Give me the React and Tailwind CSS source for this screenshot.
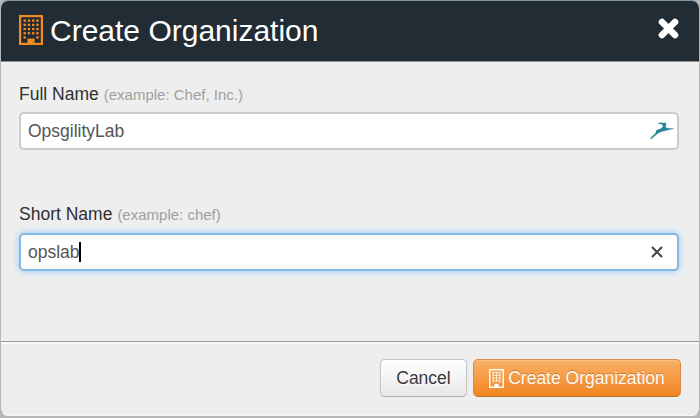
import React from "react";

const windows = [0, 1, 2, 3].flatMap((r) => [0, 1, 2, 3].map((c) => [c, r]));
windows.push([0, 4], [3, 4]);

function HeaderBuilding() {
  return (
    <svg width="24" height="30" viewBox="0 0 24 30" className="shrink-0">
      <rect x="1.1" y="1.1" width="21.8" height="27.8" fill="#222b33" stroke="#f18b21" strokeWidth="2.2" />
      {windows.map(([c, r]) => (
        <rect key={`${c}-${r}`} x={4.5 + c * 4.25} y={4.5 + r * 4.2} width="2.4" height="2.3" fill="#f18b21" />
      ))}
      <path d="M8.5 29v-5.5h7V29z" fill="#f18b21" />
    </svg>
  );
}

function ButtonBuilding() {
  return (
    <svg width="15" height="19" viewBox="0 0 15 19" className="shrink-0">
      <rect x=".75" y=".75" width="13.5" height="17.5" fill="none" stroke="#fff8ec" strokeWidth="1.5" />
      <path d="M3 3.6h9M3 6.4h9M3 9.2h9M3 12h9M4.2 3v11M7.5 3v10M10.8 3v11" stroke="#fff8ec" strokeOpacity=".75" strokeWidth="1" fill="none" />
      <path d="M5.3 18.5v-3.7h4.4v3.7z" fill="#fff8ec" />
    </svg>
  );
}

function Label({ title, hint }) {
  return (
    <label className="flex h-5 items-baseline whitespace-pre text-[17.5px] leading-5 text-[#303030]">
      {title}
      <span className="ml-[5px] text-[15px] text-[#a0a0a0]">{hint}</span>
    </label>
  );
}

export default function App() {
  return (
    <div className="h-[418px] w-[700px] overflow-hidden bg-[#b6b7b8] font-['Liberation_Sans',Arial,sans-serif]">
      <div className="flex h-[416px] w-[700px] flex-col overflow-hidden rounded-[8px] border-x border-b border-t border-x-[#b4b7b9] border-b-[#f5f5f5] border-t-[#87969d] bg-[#eeeeee]">
        <header className="flex h-[61px] shrink-0 items-start justify-between border-b border-[#8e9397] bg-[#222c34] pl-[18px] pr-5">
          <div className="flex items-start pt-[14px]">
            <HeaderBuilding />
            <h1 className="ml-[7px] whitespace-nowrap text-[30px] leading-[32px] text-white">Create Organization</h1>
          </div>
          <svg width="21" height="21" viewBox="0 0 21 21" className="mt-[17px]">
            <path d="M4 4l13 13M17 4L4 17" stroke="#fff" strokeWidth="6.6" strokeLinecap="round" />
          </svg>
        </header>
        <main className="flex h-[279px] shrink-0 flex-col pl-[18px] pr-5 pt-[22px]">
          <Label title="Full Name" hint="(example: Chef, Inc.)" />
          <div className="mt-[8px] flex h-[38px] shrink-0 items-center justify-between rounded-[5px] border-2 border-[#cccccc] bg-white pl-[7px] pr-[3px] text-[17.5px] text-[#555]">
            <span>OpsgilityLab</span>
            <svg width="24" height="18" viewBox="0 0 24 18">
              <path d="M.3 16.2L5.8 11 6.2 8.6 11.6 6.2 13.2 4 12 2.2 8 1.6 9.5.7 16 1 15.7 5.3 17 6.2 23.7 6.6 17 8.2 12 9.6 8.2 11 1.2 17z" fill="#248697" stroke="#248697" strokeWidth=".3" />
            </svg>
          </div>
          <div className="mt-[54px]">
            <Label title="Short Name" hint="(example: chef)" />
          </div>
          <div className="mt-[9px] flex h-[38px] shrink-0 items-center justify-between rounded-[5px] border-2 border-[#85b7e1] bg-white pl-[7px] pr-[14px] text-[17.5px] text-[#555] shadow-[0_0_7px_#8dcaff]">
            <div className="flex items-center">
              <span>opslab</span>
              <span className="-ml-px h-5 w-[2px] bg-black" />
            </div>
            <svg width="12" height="12" viewBox="0 0 12 12">
              <path d="M1 1l10 10M11 1L1 11" stroke="#444" strokeWidth="2" />
            </svg>
          </div>
        </main>
        <footer className="flex h-[74px] shrink-0 items-start justify-end gap-[6px] border-t border-[#989a9b] pr-[18px] pt-[17px] shadow-[inset_0_2px_0_#fafafa]">
          <button className="flex h-[38px] w-[87px] items-center justify-center rounded-[5px] border border-[#c7c7c7] border-b-[#aeaeae] bg-gradient-to-b from-white to-[#e8e8e8] text-[17.5px] text-[#383838] shadow-[0_0_1px_#b5b5b5] [text-shadow:0_1px_1px_#fff]">
            Cancel
          </button>
          <button className="flex h-[38px] w-[208px] items-center justify-center whitespace-nowrap rounded-[5px] border border-[#d98b45] border-b-[#bc6d24] bg-gradient-to-b from-[#f9b064] to-[#f1851d] text-[17.5px] text-[#fffaf2] shadow-[inset_0_1px_0_#fac084] [text-shadow:0_-1px_0_#c87c3b]">
            <ButtonBuilding />
            <span className="ml-1">Create Organization</span>
          </button>
        </footer>
      </div>
    </div>
  );
}
